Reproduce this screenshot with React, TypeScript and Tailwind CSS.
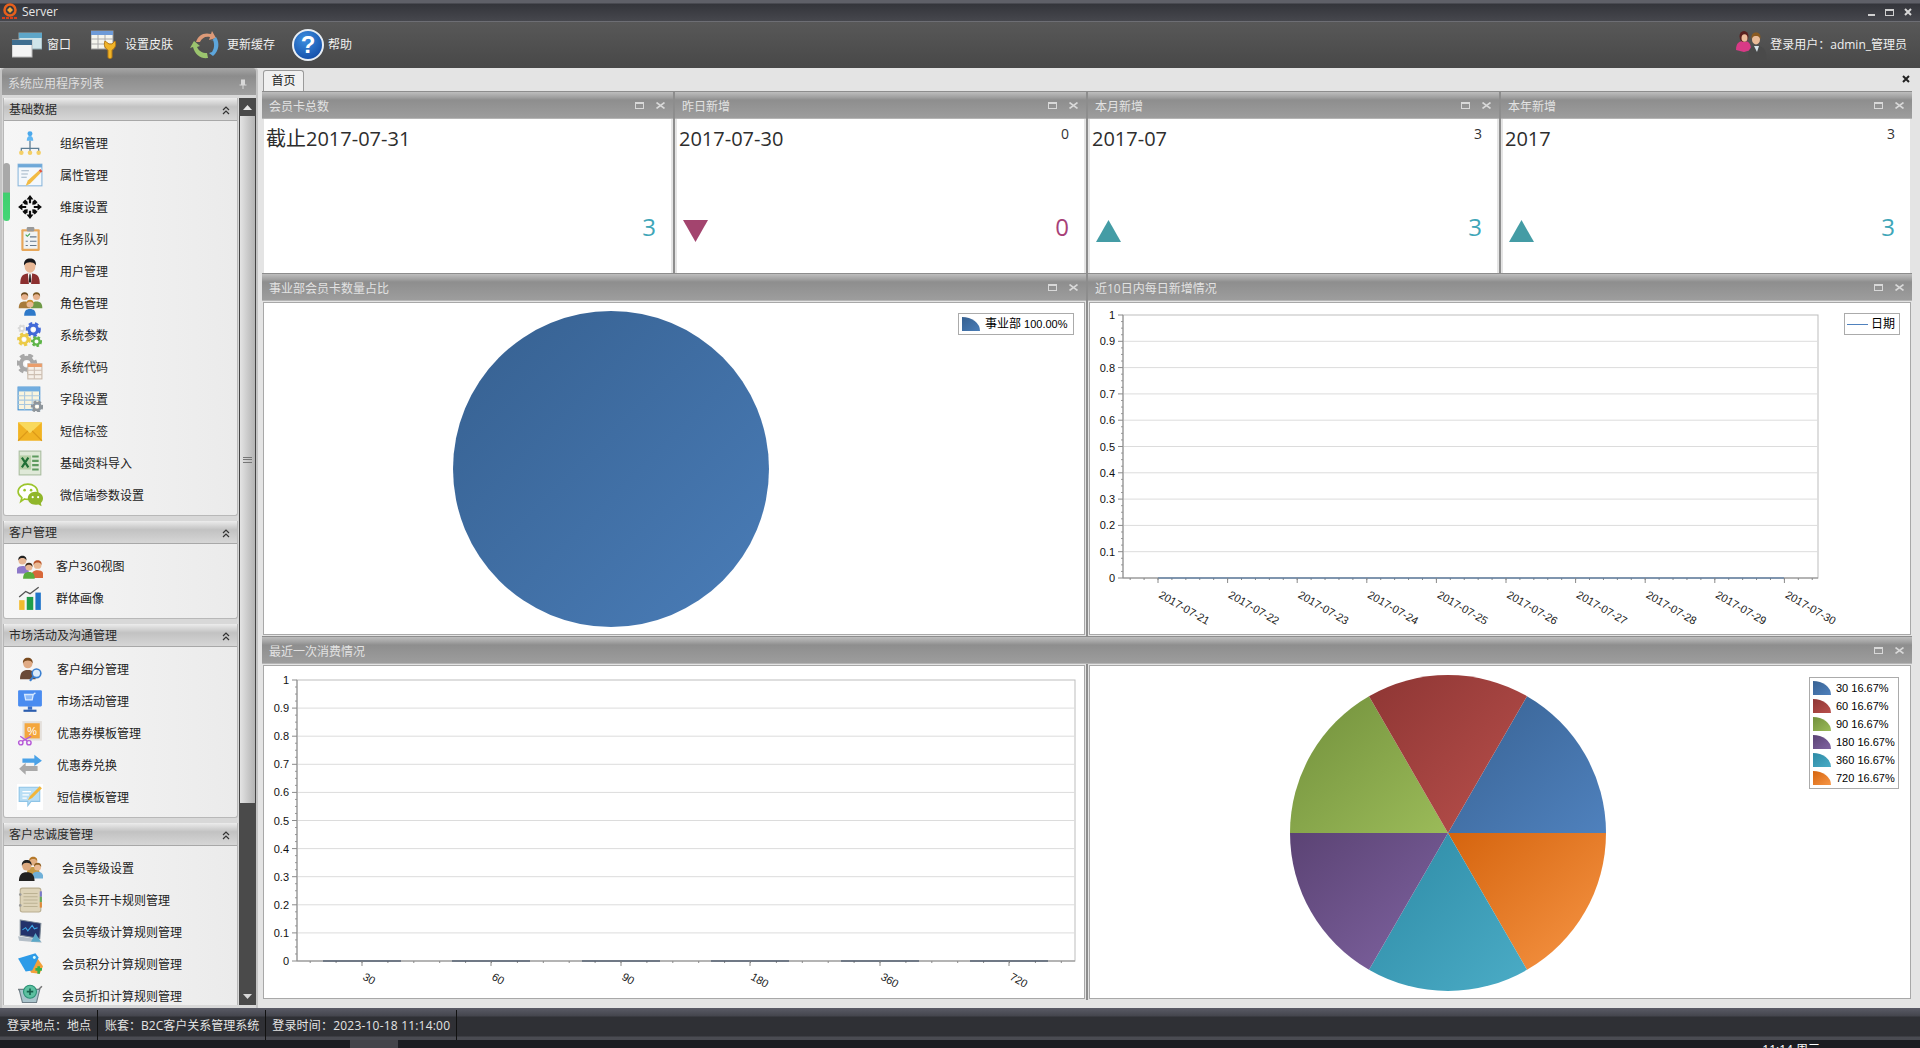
const cjk = "font-['Open_Sans','Noto_Sans_CJK_SC',sans-serif]";

type Item = { icon: string; label: string };
type Group = { title: string; gap: string; items: Item[] };

const groups: Group[] = [
  {
    title: "基础数据",
    gap: "gap-[17px]",
    items: [
      { icon: "org", label: "组织管理" },
      { icon: "attr", label: "属性管理" },
      { icon: "dim", label: "维度设置" },
      { icon: "task", label: "任务队列" },
      { icon: "user", label: "用户管理" },
      { icon: "role", label: "角色管理" },
      { icon: "param", label: "系统参数" },
      { icon: "code", label: "系统代码" },
      { icon: "field", label: "字段设置" },
      { icon: "mail", label: "短信标签" },
      { icon: "excel", label: "基础资料导入" },
      { icon: "wechat", label: "微信端参数设置" },
    ],
  },
  {
    title: "客户管理",
    gap: "gap-[13px]",
    items: [
      { icon: "c360", label: "客户360视图" },
      { icon: "bars", label: "群体画像" },
    ],
  },
  {
    title: "市场活动及沟通管理",
    gap: "gap-[14px]",
    items: [
      { icon: "segment", label: "客户细分管理" },
      { icon: "market", label: "市场活动管理" },
      { icon: "coupon", label: "优惠券模板管理" },
      { icon: "swap", label: "优惠券兑换" },
      { icon: "note", label: "短信模板管理" },
    ],
  },
  {
    title: "客户忠诚度管理",
    gap: "gap-[19px]",
    items: [
      { icon: "level", label: "会员等级设置" },
      { icon: "book", label: "会员卡开卡规则管理" },
      { icon: "laptop", label: "会员等级计算规则管理" },
      { icon: "tag", label: "会员积分计算规则管理" },
      { icon: "cart", label: "会员折扣计算规则管理" },
    ],
  },
];

const Gear = ({ x, y, r, c }: { x: number; y: number; r: number; c: string }) => (
  <g>
    <circle cx={x} cy={y} r={r} fill="none" stroke={c} strokeWidth={r * 0.55} strokeDasharray={`${r * 0.55} ${r * 0.42}`} />
    <circle cx={x} cy={y} r={r * 0.72} fill="none" stroke={c} strokeWidth={r * 0.5} />
    <circle cx={x} cy={y} r={r * 0.3} fill="#fff" />
  </g>
);

const Person = ({ x, y, s, skin, hair, body }: { x: number; y: number; s: number; skin: string; hair: string; body: string }) => (
  <g transform={`translate(${x} ${y}) scale(${s})`}>
    <path d="M-6 12c0-5 2-7 6-7s6 2 6 7z" fill={body} />
    <circle cx="0" cy="0" r="3.6" fill={skin} />
    <path d="M-3.7 0c-.4-3 1.4-4.4 3.7-4.4S4.100-3 3.700 0C3 -1.800 1.500-2.300 0-2.300S-3-1.800-3.700 0z" fill={hair} />
  </g>
);

const NavIcon = ({ name }: { name: string }) => {
  const shapes: Record<string, React.ReactNode> = {
    org: (
      <>
        <circle cx="12" cy="3.500" r="2.300" fill="#4aa8ec" />
        <path d="M9 10c0-3 1-4.500 3-4.500S15 7 15 10z" fill="#5fb6f2" />
        <path d="M12 10v7M4 20v-3h16v3M12 17v3" stroke="#5d7d94" strokeWidth="1.200" fill="none" />
        <circle cx="4" cy="21" r="2.100" fill="#f4cf66" />
        <circle cx="12" cy="21" r="2.100" fill="#f4cf66" />
        <circle cx="20" cy="21" r="2.100" fill="#f4cf66" />
      </>
    ),
    attr: (
      <>
        <rect x="1" y="2" width="22" height="20" fill="#f4f8fc" stroke="#8cb8dc" />
        <rect x="1" y="2" width="22" height="3" fill="#6ea8d8" />
        <path d="M4 8h7M4 11h6M4 14h5" stroke="#9fb4c6" />
        <path d="M8 22l2-5L20 8l2 2-10 10z" fill="#f2bb45" />
        <path d="M20 8l1.500-1.500 2 2L22 10z" fill="#e4583f" />
      </>
    ),
    dim: (
      <>
        {[0, 90, 180, 270].map((a) => (
          <g key={a} transform={`rotate(${a} 12 12)`}>
            <path d="M12 1l3.200 4h-2.200v3.500h-2V5H8.800z" fill="#0c0c0c" />
          </g>
        ))}
        {[45, 135, 225, 315].map((a) => (
          <g key={a} transform={`rotate(${a} 12 12)`}>
            <path d="M10.200 4h3.600v3l-1.800 2-1.800-2z" fill="#0c0c0c" />
          </g>
        ))}
      </>
    ),
    task: (
      <>
        <rect x="4" y="3" width="17" height="20" rx="1" fill="#e7a75a" />
        <rect x="6" y="5" width="13" height="16" fill="#f0f3f4" />
        <rect x="9" y="1" width="7" height="4" rx="1" fill="#9a9a9a" />
        <path d="M8 8l1.500 1.500L12 7" stroke="#3fa34d" fill="none" />
        <path d="M12 10h6M12 14h6M12 18h6M8 14h2M8 18h2" stroke="#66788a" />
      </>
    ),
    user: (
      <>
        <path d="M3 24c0-7 2-10 9-10s9 3 9 10z" fill="#8c2f2f" />
        <path d="M10 14h4l-1 10h-2z" fill="#fff" />
        <path d="M11.400 15h1.200l.4 7-1 1-1-1z" fill="#222" />
        <ellipse cx="12" cy="7.500" rx="5" ry="6" fill="#e8b795" />
        <path d="M6.500 7C6 2 9 .5 12 .5S18 2 17.500 7C16 4.500 14 4 12 4S8 4.500 6.500 7z" fill="#16161a" />
      </>
    ),
    role: (
      <>
        <Person x={7} y={6} s={0.9} skin="#e6b18b" hair="#6b4a1e" body="#a77a3a" />
        <Person x={18} y={6} s={0.9} skin="#e6b18b" hair="#7a5620" body="#6f9a48" />
        <Person x={12} y={13} s={0.9} skin="#eab993" hair="#c78b2e" body="#2e79c9" />
      </>
    ),
    param: (
      <>
        <Gear x={15} y={7} r={5.500} c="#4269d8" />
        <Gear x={6.500} y={16} r={5} c="#eccb48" />
        <Gear x={18} y={18} r={4} c="#5eb548" />
        <Gear x={4.500} y={6} r={3} c="#d8d8d8" />
      </>
    ),
    code: (
      <>
        <Gear x={9} y={9} r={7.500} c="#a8a8a8" />
        <rect x="10" y="9" width="13" height="14" fill="#f5efe8" stroke="#c9b9aa" />
        <rect x="10" y="9" width="13" height="3" fill="#ea9d6b" />
        <path d="M10 15h13M10 19h13M16 12v11" stroke="#cdbfb2" />
      </>
    ),
    field: (
      <>
        <rect x="1" y="1" width="20" height="21" fill="#f9f4de" stroke="#3f8ed2" />
        <rect x="1" y="1" width="20" height="4" fill="#71ade0" />
        <path d="M1 9h20M1 13h20M1 17h20M7 5v17M14 5v17" stroke="#a9c8df" />
        <Gear x={18.500} y={19} r={4.500} c="#8f969c" />
      </>
    ),
    mail: (
      <>
        <rect x="1" y="4" width="22" height="17" fill="#f1b323" />
        <path d="M1 4l11 10L23 4" fill="#f9d95c" />
        <path d="M1 21l9-9M23 21l-9-9" stroke="#dd9a18" />
      </>
    ),
    excel: (
      <>
        <rect x="2" y="1" width="20" height="22" fill="#dfe9d8" stroke="#a9bda0" />
        <path d="M14 6h6M14 10h6M14 14h6M14 18h6" stroke="#5d9a5e" strokeWidth="2" />
        <rect x="2" y="5" width="11" height="13" fill="#b6d0a6" />
        <path d="M4.500 7l6 9M10.500 7l-6 9" stroke="#1f6f35" strokeWidth="2" />
      </>
    ),
    wechat: (
      <>
        <path d="M10 2c5 0 9 3 9 7s-4 7-9 7c-1 0-2 0-3-.4L3.500 18l1-3.500C2.500 13 1 11 1 9c0-4 4-7 9-7z" fill="#fff" stroke="#9cc52c" strokeWidth="1.500" />
        <circle cx="7" cy="7.500" r="1.200" fill="#9cc52c" />
        <circle cx="13" cy="7.500" r="1.200" fill="#9cc52c" />
        <path d="M17 9c4 0 7 2.800 7 6 0 1.800-.8 3.200-2 4.400l.7 3-3-1.700c-.9.300-1.800.3-2.700.3-4 0-7-2.700-7-6s3-6 7-6z" fill="#90b62a" />
        <circle cx="14.500" cy="14" r="1" fill="#fff" />
        <circle cx="19.500" cy="14" r="1" fill="#fff" />
      </>
    ),
    c360: (
      <>
        <Person x={5} y={7} s={1} skin="#e8b795" hair="#222" body="#8d78c9" />
        <Person x={19} y={11} s={1} skin="#eab993" hair="#b9542a" body="#d8683a" />
        <Person x={11} y={13} s={0.9} skin="#e8b795" hair="#3b2a18" body="#58ad3c" />
      </>
    ),
    bars: (
      <>
        <rect x="2" y="14" width="5" height="9" fill="#f2bb2f" />
        <rect x="9" y="11" width="6" height="12" fill="#1f9e4a" />
        <rect x="17" y="7" width="5" height="16" fill="#1f74c9" />
        <path d="M2 11l6-5 4 2 8-6" stroke="#555" strokeWidth="1.200" fill="none" />
      </>
    ),
    segment: (
      <>
        <Person x={10} y={7} s={1.200} skin="#e0ab85" hair="#7a4a1e" body="#6a4a38" />
        <circle cx="18" cy="16" r="4" fill="#dcebfa" stroke="#3a7fd0" strokeWidth="1.500" />
        <path d="M15 19l-3 4" stroke="#3a7fd0" strokeWidth="2" />
      </>
    ),
    market: (
      <>
        <rect x="1" y="2" width="22" height="15" rx="1" fill="#4a8cf0" />
        <path d="M7 6h8l-1 5H8zM15 6l2-1.500" stroke="#d6e8ff" strokeWidth="1.200" fill="#8ab8f8" />
        <rect x="10" y="17" width="4" height="3" fill="#3a70c8" />
        <rect x="6" y="20" width="12" height="2" fill="#2b5dae" />
      </>
    ),
    coupon: (
      <>
        <rect x="5" y="1" width="18" height="18" fill="#e4e0dc" />
        <rect x="7" y="3" width="14" height="14" fill="#f4a63d" />
        <text x="14" y="14" fontSize="10" textAnchor="middle" fill="#fff" fontFamily="Liberation Sans">%</text>
        <circle cx="3.500" cy="21" r="2" fill="none" stroke="#b557d8" strokeWidth="1.300" />
        <circle cx="11" cy="21" r="2" fill="none" stroke="#b557d8" strokeWidth="1.300" />
        <path d="M5 19.500L13 15M9.500 19.500L3 15" stroke="#b557d8" strokeWidth="1.200" />
      </>
    ),
    swap: (
      <>
        <path d="M5 6h11V2.500L23 8l-7 5V10H5z" fill="#4aa2e8" />
        <path d="M19 13H8V10L2 15.500 8 21v-3.500h11z" fill="#a9a9a9" />
      </>
    ),
    note: (
      <>
        <rect x="0" y="0" width="24" height="24" fill="#fff" />
        <path d="M2 3h19v13H13l-3 4v-4H2z" fill="#b8def5" stroke="#8ec4e6" />
        <path d="M5 7h8M5 10h6M5 13h4" stroke="#fff" />
        <path d="M10 15l2-4 9-9 2 2-9 9z" fill="#f2b63a" />
      </>
    ),
    level: (
      <>
        <Person x={15} y={6} s={1} skin="#e2b084" hair="#b5792a" body="#c59a47" />
        <Person x={19} y={11} s={0.9} skin="#eab993" hair="#8c5f22" body="#6fb0d8" />
        <Person x={9} y={10} s={1.200} skin="#dca97f" hair="#222" body="#222" />
      </>
    ),
    book: (
      <>
        <rect x="3" y="1" width="19" height="22" rx="2" fill="#ddd3b8" stroke="#b9ae90" />
        <path d="M6 6h13M6 9h13M6 12h13M6 15h13M6 18h13" stroke="#bcb293" />
        <rect x="21" y="4" width="2" height="5" fill="#7a7ac8" />
        <rect x="21" y="9" width="2" height="5" fill="#65a85a" />
        <rect x="21" y="14" width="2" height="5" fill="#dd8a3a" />
        <circle cx="3" cy="7" r="1.200" fill="#999" />
        <circle cx="3" cy="17" r="1.200" fill="#999" />
      </>
    ),
    laptop: (
      <>
        <path d="M3 1l19 3-1 14-18-3z" fill="#23336b" stroke="#7a8794" />
        <path d="M5 10l3-2 2 3 4-5 2 3 3-1" stroke="#3fa9e8" fill="none" />
        <path d="M1 16l20 3 2 3-21-2z" fill="#b5bfc8" />
        <path d="M17 13l5 8h-9z" fill="#5aa8c8" />
      </>
    ),
    tag: (
      <>
        <path d="M8 9l11-2 5 7-3 7-8-1z" fill="#f3a03a" />
        <path d="M1 7l16-5 3 4-6 12-6 1z" fill="#2d9be8" />
        <circle cx="16" cy="6" r="1.300" fill="#dff" />
        <path d="M17 17h6M20 14v7" stroke="#34b04a" strokeWidth="2.400" />
      </>
    ),
    cart: (
      <>
        <path d="M1 6h19l3-3" stroke="#777" strokeWidth="1.500" fill="none" />
        <path d="M2 6l3 12h13l3-12z" fill="#a9c4cc" stroke="#6f7f88" />
        <path d="M5 21h13" stroke="#777" strokeWidth="1.500" />
        <circle cx="6" cy="22.500" r="1.500" fill="#555" />
        <circle cx="17" cy="22.500" r="1.500" fill="#555" />
        <circle cx="12" cy="8" r="6" fill="#5cc0a0" stroke="#2a8f74" />
        <path d="M9 8h6M12 5v6" stroke="#16604c" strokeWidth="1.500" />
      </>
    ),
  };
  return (
    <svg viewBox="0 0 24 24" className="w-[26px] h-[26px] shrink-0">
      {shapes[name]}
    </svg>
  );
};

const WindowsIcon = () => (
  <svg viewBox="0 0 30 26" className="w-[30px] h-[26px]">
    <rect x="7" y="1" width="23" height="16" fill="#cfe5ea" stroke="#8fa8b0" />
    <rect x="7" y="1" width="23" height="5" fill="#5ea6c8" />
    <rect x="0" y="8" width="20" height="17" fill="#f4f4f4" stroke="#bbb" />
    <rect x="0" y="8" width="20" height="5" fill="#3f6e90" />
  </svg>
);

const SkinIcon = () => (
  <svg viewBox="0 0 28 30" className="w-[28px] h-[30px]">
    <rect x="0" y="1" width="22" height="18" fill="#f5f5ee" stroke="#999" />
    <rect x="0" y="1" width="22" height="4" fill="#6e9bd8" />
    <path d="M0 9h22M0 14h22M7 5v14M14 5v14" stroke="#aaa" />
    <path d="M14 11c-2 5 1 8 3 9v7c0 2 4 2 4 0v-7c2-1 5-4 3-9l-3 3h-3z" fill="#f0b428" stroke="#b87a12" />
  </svg>
);

const RefreshIcon = () => (
  <svg viewBox="0 0 32 32" className="w-[32px] h-[32px]">
    <path d="M6 13C8 6 14 3 21 5l1-3 4 7-7 2 1-3c-5-1-8 1-10 5z" fill="#dd9a78" />
    <path d="M26 8c4 6 3 14-3 19l-4-3 3-1c2-3 3-7 1-12l-2 1z" fill="#5da6dc" />
    <path d="M18 29c-7 1-13-3-15-11l-3 1 4-7 6 5-3 1c2 4 5 6 10 6z" fill="#9bc46e" />
  </svg>
);

const HelpIcon = () => (
  <div className="w-[32px] h-[32px] rounded-full border-[2px] border-[#e8eef4] bg-[radial-gradient(circle_at_40%_30%,#3d8fe0,#0a3f9c)] flex items-center justify-center font-['Liberation_Sans',sans-serif] font-bold text-[24px] text-white leading-none">
    ?
  </div>
);

const PairIcon = () => (
  <svg viewBox="0 0 32 30" className="w-[32px] h-[30px]">
    <path d="M1 20c0-7 3-9 8-9s7 3 7 9l-7 2z" fill="#d83a86" />
    <ellipse cx="9" cy="6.500" rx="4.500" ry="5.500" fill="#5a1f1f" />
    <ellipse cx="9.500" cy="8" rx="3" ry="3.800" fill="#eebc9c" />
    <path d="M14 30c-2-10 1-14 8-14s10 5 9 14z" fill="#4a4a4a" />
    <path d="M19 16h5l-2 6z" fill="#d8e4ea" />
    <ellipse cx="21" cy="9.500" rx="4" ry="5" fill="#eabb98" />
    <path d="M16.500 9c-.5-5 2-6.500 4.500-6.500s5.200 1.500 4.500 6.500c-1-2.500-3-3-4.500-3s-3.500.5-4.500 3z" fill="#8a5a22" />
  </svg>
);

const Logo = () => (
  <svg viewBox="0 0 16 18" className="w-[16px] h-[18px]">
    <circle cx="8" cy="7" r="5.500" fill="none" stroke="#e8601c" strokeWidth="2.500" />
    <path d="M5 7l3-3 3 3-3 3z" fill="#f2a53a" />
    <path d="M0 15h16" stroke="#d8401c" strokeWidth="2" strokeDasharray="3 1" />
  </svg>
);

const PanelButtons = () => (
  <div className="flex items-center gap-[12px] pr-[8px]">
    <svg viewBox="0 0 9 7" className="w-[9px] h-[7px]">
      <rect x="0.500" y="0.500" width="8" height="6" fill="none" stroke="#d8d8d8" />
      <rect x="0" y="0" width="9" height="2" fill="#d8d8d8" />
    </svg>
    <svg viewBox="0 0 9 7" className="w-[9px] h-[7px]">
      <path d="M.5 .5l8 6M8.500 .5l-8 6" stroke="#d8d8d8" strokeWidth="1.600" />
    </svg>
  </div>
);

const PanelHeader = ({ title }: { title: string }) => (
  <div className="h-[27px] shrink-0 flex items-center justify-between pl-[7px] bg-[linear-gradient(#bdbdbd_0,#a2a2a2_5px,#8e8e8e_8px,#9d9d9d_100%)] border-b border-[#b5b5b5]">
    <span className="pt-[3px] text-[12px] text-[#e2e2e2]">{title}</span>
    <PanelButtons />
  </div>
);

const cards = [
  { title: "会员卡总数", date: "截止2017-07-31", small: "", big: "3", dir: "none" },
  { title: "昨日新增", date: "2017-07-30", small: "0", big: "0", dir: "down" },
  { title: "本月新增", date: "2017-07", small: "3", big: "3", dir: "up" },
  { title: "本年新增", date: "2017", small: "3", big: "3", dir: "up" },
];

const Card = ({ title, date, small, big, dir }: (typeof cards)[number]) => (
  <div className="flex flex-col min-h-0">
    <PanelHeader title={title} />
    <div className="flex-1 bg-white border-x-[2px] border-[#e4e4e4] flex flex-col justify-between pl-[2px] pr-[15px] pt-[6px] pb-[31px]">
      <div className="flex justify-between">
        <span className="text-[20px] leading-[28px] text-[#2d2d2d]">{date}</span>
        <span className="text-[14px] leading-[18px] text-[#333]">{small}</span>
      </div>
      <div className="flex justify-between items-end">
        <div className="w-[25px] h-[22px] ml-[4px]">
          {dir === "up" && (
            <svg viewBox="0 0 25 22" className="w-[25px] h-[22px]">
              <path d="M12.500 0L25 22H0z" fill="#449ca5" />
            </svg>
          )}
          {dir === "down" && (
            <svg viewBox="0 0 25 22" className="w-[25px] h-[22px]">
              <path d="M0 0h25L12.500 22z" fill="#a3446e" />
            </svg>
          )}
        </div>
        <span className={`text-[24px] leading-[30px] ${dir === "down" ? "text-[#a83f78]" : "text-[#3fa6b8]"}`}>{big}</span>
      </div>
    </div>
  </div>
);

const LineChart = ({
  ox,
  oy,
  x0,
  x1,
  y0,
  y1,
  ticks,
  labels,
  step,
  segments,
  labelY,
}: {
  ox: number;
  oy: number;
  x0: number;
  x1: number;
  y0: number;
  y1: number;
  ticks: number[];
  labels: string[];
  step: number;
  segments: [number, number, string][];
  labelY: number;
}) => {
  const ys = Array.from({ length: 11 }, (_, i) => i);
  const minor: number[] = [];
  for (let x = ticks[0] % step; x < x1; x += step) {
    if (x > x0) minor.push(x);
  }
  return (
    <svg className="w-full h-full font-['Liberation_Sans',sans-serif]">
      <g transform={`translate(${-ox} ${-oy})`}>
        <rect x={x0} y={y1} width={x1 - x0} height={y0 - y1} fill="none" stroke="#bdbdbd" />
        {ys.map((i) => {
          const y = y0 - ((y0 - y1) * i) / 10;
          return (
            <g key={i}>
              {i > 0 && i < 10 && <line x1={x0} x2={x1} y1={y} y2={y} stroke="#dcdcdc" />}
              <line x1={x0 - 5} x2={x0} y1={y} y2={y} stroke="#8a8a8a" />
              {i < 10 &&
                [1, 2, 3].map((m) => {
                  const my = y - (((y0 - y1) / 10) * m) / 4;
                  return <line key={m} x1={x0 - 2} x2={x0} y1={my} y2={my} stroke="#9a9a9a" />;
                })}
              <text x={x0 - 8} y={y + 4} fontSize="11" textAnchor="end" fill="#111">
                {i === 0 ? "0" : i === 10 ? "1" : `0.${i}`}
              </text>
            </g>
          );
        })}
        <line x1={x0} x2={x0} y1={y1} y2={y0} stroke="#8a8a8a" />
        <line x1={x0} x2={x1} y1={y0} y2={y0} stroke="#8a8a8a" />
        {minor.map((x) => (
          <line key={x} x1={x} x2={x} y1={y0} y2={y0 + 2} stroke="#8a8a8a" />
        ))}
        {segments.map(([a, b, c]) => (
          <line key={a} x1={a} x2={b} y1={y0} y2={y0} stroke={c} strokeWidth="1.200" />
        ))}
        {ticks.map((x, i) => (
          <g key={x}>
            <line x1={x} x2={x} y1={y0} y2={y0 + 5} stroke="#8a8a8a" />
            <text x={x} y={labelY} fontSize="11" fill="#222" transform={`rotate(30 ${x} ${labelY})`}>
              {labels[i]}
            </text>
          </g>
        ))}
      </g>
    </svg>
  );
};

const slices = [
  { from: 30, to: 90, a: "#386293", b: "#4f81bd" },
  { from: 90, to: 150, a: "#d5640e", b: "#f79646" },
  { from: 150, to: 210, a: "#2d8aa5", b: "#4bacc6" },
  { from: 210, to: 270, a: "#5b4374", b: "#8064a2" },
  { from: 270, to: 330, a: "#72903c", b: "#9bbb59" },
  { from: 330, to: 390, a: "#8e3634", b: "#b9504c" },
];

const point = (cx: number, cy: number, r: number, deg: number) => {
  const a = (deg * Math.PI) / 180;
  return `${cx + r * Math.sin(a)} ${cy - r * Math.cos(a)}`;
};

const Swatch = ({ id, a, b }: { id: string; a: string; b: string }) => (
  <svg viewBox="0 0 18 14" className="w-[18px] h-[14px] shrink-0">
    <defs>
      <linearGradient id={id} x1="0" y1="0" x2="1" y2="1">
        <stop offset="0" stopColor={a} />
        <stop offset="1" stopColor={b} />
      </linearGradient>
    </defs>
    <path d="M0 0a18 14 0 0 1 18 14H0z" fill={`url(#${id})`} />
  </svg>
);

const legend = [
  { label: "30 16.67%", a: "#386293", b: "#4f81bd" },
  { label: "60 16.67%", a: "#8e3634", b: "#b9504c" },
  { label: "90 16.67%", a: "#72903c", b: "#9bbb59" },
  { label: "180 16.67%", a: "#5b4374", b: "#8064a2" },
  { label: "360 16.67%", a: "#2d8aa5", b: "#4bacc6" },
  { label: "720 16.67%", a: "#d5640e", b: "#f79646" },
];

const ticks1 = Array.from({ length: 10 }, (_, i) => 1158 + i * 69.6);
const dates = Array.from({ length: 10 }, (_, i) => `2017-07-${21 + i}`);
const ticks2 = [362, 491, 621, 750, 880, 1009];
const segs2: [number, number, string][] = ticks2.map((x) => [x - 39, x + 39, "#2c3e58"]);

export default function App() {
  return (
    <div className={`w-[1920px] h-[1048px] overflow-hidden flex flex-col relative ${cjk} bg-[#e4e4e4]`}>
      <div className="h-[22px] shrink-0 flex items-center justify-between bg-[linear-gradient(#5f6068_0,#5f6068_3px,#34353b_4px,#46474d_100%)] border-b border-[#6d6e74] pl-[2px] pr-[8px] pt-[3px]">
        <div className="flex items-center gap-[4px]">
          <Logo />
          <span className="text-[12px] text-[#e6e6e6]">Server</span>
        </div>
        <div className="flex items-center gap-[10px] text-[#d8d8d8]">
          <div className="w-[7px] h-[2px] mt-[6px] bg-[#d0d0d0]" />
          <div className="w-[9px] h-[7px] border border-[#d0d0d0] border-t-2" />
          <svg viewBox="0 0 8 8" className="w-[8px] h-[8px]">
            <path d="M1 1l6 6M7 1L1 7" stroke="#d8d8d8" strokeWidth="2" />
          </svg>
        </div>
      </div>

      <div className="h-[46px] shrink-0 flex items-center justify-between bg-[linear-gradient(#585858,#484848)] pl-[12px] pr-[13px] text-[12px] text-[#f0f0f0]">
        <div className="flex items-center">
          <div className="flex items-center gap-[5px]">
            <WindowsIcon />
            <span>窗口</span>
          </div>
          <div className="flex items-center gap-[6px] ml-[20px]">
            <SkinIcon />
            <span>设置皮肤</span>
          </div>
          <div className="flex items-center gap-[5px] ml-[17px]">
            <RefreshIcon />
            <span>更新缓存</span>
          </div>
          <div className="flex items-center gap-[4px] ml-[17px]">
            <HelpIcon />
            <span>帮助</span>
          </div>
        </div>
        <div className="flex items-center gap-[3px]">
          <PairIcon />
          <span>登录用户：admin_管理员</span>
        </div>
      </div>

      <div className="flex-1 min-h-0 flex">
        <div className="w-[258px] shrink-0 flex flex-col bg-[#d8d8d8] rounded-t-[3px] border-x-[2px] border-[#c4c4c4] pb-[3px]">
          <div className="h-[27px] shrink-0 flex items-center justify-between pl-[6px] pr-[9px] pt-[4px] rounded-t-[3px] bg-[linear-gradient(#a6a6a6_0,#8c8c8c_8px,#a0a0a0_100%)]">
            <span className="text-[12px] text-[#dedede]">系统应用程序列表</span>
            <svg viewBox="0 0 8 10" className="w-[8px] h-[10px]">
              <path d="M2 0.500h4v5h1.500v1h-7v-1H2zM3.500 6.500h1V10h-1z" fill="#d8d8d8" />
            </svg>
          </div>
          <div className="flex-1 min-h-0 flex gap-px pl-px pt-[3px]">
            <div className="flex-1 min-w-0 overflow-hidden flex flex-col gap-[5px]">
              {groups.map((g) => (
                <div key={g.title} className="shrink-0 border-x border-b border-[#b8b8b8] rounded-b-[3px] bg-[linear-gradient(90deg,#f6f6f6,#ebebeb)]">
                  <div className="h-[23px] flex items-center justify-between pl-[5px] pr-[7px] pt-[2px] border-b border-[#a8a8a8] rounded-t-[3px] bg-[linear-gradient(#ececec_0,#c2c2c2_40%,#d6d6d6_100%)]">
                    <span className="text-[12px] text-[#2a2a2a]">{g.title}</span>
                    <svg viewBox="0 0 8 9" className="w-[8px] h-[9px]">
                      <path d="M1 4l3-3 3 3M1 8l3-3 3 3" stroke="#333" strokeWidth="1.200" fill="none" />
                    </svg>
                  </div>
                  <div className="pt-[6px] pb-[4px]">
                    {g.items.map((it) => (
                      <div key={it.label} className={`h-[32px] flex items-center pl-[13px] ${g.gap}`}>
                        <NavIcon name={it.icon} />
                        <span className="pt-px text-[12px] text-[#222]">{it.label}</span>
                      </div>
                    ))}
                  </div>
                </div>
              ))}
            </div>
            <div className="w-[17px] shrink-0 flex flex-col bg-[#4a4a4a]">
              <div className="h-[18px] flex items-center justify-center">
                <svg viewBox="0 0 9 5" className="w-[9px] h-[5px]">
                  <path d="M0 5l4.500-5L9 5z" fill="#e8e8e8" />
                </svg>
              </div>
              <div className="h-[687px] flex items-center justify-center bg-[linear-gradient(90deg,#e4e4e4,#c6c6c6_60%,#b4b4b4)] border-x border-[#444]">
                <div className="w-[9px] h-[6px] border-y-[1px] border-[#777] flex items-center">
                  <div className="w-full h-px bg-[#777]" />
                </div>
              </div>
              <div className="flex-1" />
              <div className="h-[18px] flex items-center justify-center">
                <svg viewBox="0 0 9 5" className="w-[9px] h-[5px]">
                  <path d="M0 0l4.500 5L9 0z" fill="#d8d8d8" />
                </svg>
              </div>
            </div>
          </div>
        </div>

        <div className="flex-1 min-w-0 flex flex-col pl-[4px] pr-[8px] pb-[8px] bg-[#e4e4e4]">
          <div className="h-[23px] shrink-0 flex items-end justify-between">
            <div className="w-[41px] h-[21px] ml-px flex items-center justify-center rounded-t-[3px] border border-b-0 border-[#9a9a9a] bg-[#f0f0f0] text-[12px] text-[#222]">
              首页
            </div>
            <svg viewBox="0 0 8 8" className="w-[8px] h-[8px] mb-[8px] mr-[2px]">
              <path d="M1 1l6 6M7 1L1 7" stroke="#222" strokeWidth="2" />
            </svg>
          </div>
          <div className="flex-1 min-h-0 grid grid-rows-[181px_362px_1fr] gap-y-px pt-px bg-[#8d8d8d]">
            <div className="grid grid-cols-4 gap-x-[2px]">
              {cards.map((c) => (
                <Card key={c.title} {...c} />
              ))}
            </div>

            <div className="grid grid-cols-2 gap-x-[2px]">
              <div className="flex flex-col min-h-0">
                <PanelHeader title="事业部会员卡数量占比" />
                <div className="flex-1 relative bg-white border-[2px] border-[#e4e4e4] outline outline-1 -outline-offset-2 outline-[#a8a8a8]">
                  <svg className="w-full h-full">
                    <defs>
                      <linearGradient id="pieOne" x1="0" y1="0" x2="1" y2="1">
                        <stop offset="0" stopColor="#366090" />
                        <stop offset="1" stopColor="#4a7db8" />
                      </linearGradient>
                    </defs>
                    <circle cx="347" cy="166" r="158" fill="url(#pieOne)" />
                  </svg>
                  <div className="absolute left-[694px] top-[10px] w-[116px] h-[22px] flex items-center gap-[5px] pl-[3px] bg-white border border-[#ababab] font-['Liberation_Sans','Noto_Sans_CJK_SC',sans-serif] text-[11px] text-black whitespace-nowrap">
                    <Swatch id="legendOne" a="#366090" b="#4a7db8" />
                    <span>
                      <span className="text-[12px]">事业部</span> 100.00%
                    </span>
                  </div>
                </div>
              </div>
              <div className="flex flex-col min-h-0">
                <PanelHeader title="近10日内每日新增情况" />
                <div className="flex-1 relative bg-white border-[2px] border-[#e4e4e4] outline outline-1 -outline-offset-2 outline-[#a8a8a8]">
                  <LineChart
                    ox={1090}
                    oy={303}
                    x0={1123}
                    x1={1818}
                    y0={578}
                    y1={315}
                    ticks={ticks1}
                    labels={dates}
                    step={13.92}
                    segments={[[1158, 1784, "#4a76a8"]]}
                    labelY={597}
                  />
                  <div className="absolute left-[754px] top-[10px] w-[56px] h-[22px] flex items-center gap-[3px] pl-[2px] bg-white border border-[#ababab] text-[12px] text-black">
                    <div className="w-[21px] h-px bg-[#4f81bd]" />
                    <span>日期</span>
                  </div>
                </div>
              </div>
            </div>

            <div className="flex flex-col min-h-0">
              <PanelHeader title="最近一次消费情况" />
              <div className="flex-1 min-h-0 grid grid-cols-2 gap-x-[2px]">
                <div className="bg-white border-[2px] border-[#e4e4e4] outline outline-1 -outline-offset-2 outline-[#a8a8a8]">
                  <LineChart
                    ox={264}
                    oy={666}
                    x0={297}
                    x1={1075}
                    y0={961}
                    y1={680}
                    ticks={ticks2}
                    labels={["30", "60", "90", "180", "360", "720"]}
                    step={25.9}
                    segments={segs2}
                    labelY={979}
                  />
                </div>
                <div className="relative bg-white border-[2px] border-[#e4e4e4] outline outline-1 -outline-offset-2 outline-[#a8a8a8]">
                  <svg className="w-full h-full">
                    <defs>
                      {slices.map((s) => (
                        <linearGradient key={s.from} id={`slice${s.from}`} x1="0" y1="0" x2="1" y2="1">
                          <stop offset="0" stopColor={s.a} />
                          <stop offset="1" stopColor={s.b} />
                        </linearGradient>
                      ))}
                    </defs>
                    {slices.map((s) => (
                      <path
                        key={s.from}
                        d={`M358 167L${point(358, 167, 158, s.from)}A158 158 0 0 1 ${point(358, 167, 158, s.to)}Z`}
                        fill={`url(#slice${s.from})`}
                      />
                    ))}
                  </svg>
                  <div className="absolute left-[719px] top-[11px] w-[90px] flex flex-col py-[1px] pl-[3px] bg-white border border-[#ababab] font-['Liberation_Sans',sans-serif] text-[11px] text-black">
                    {legend.map((l, i) => (
                      <div key={l.label} className="h-[18px] flex items-center gap-[5px] whitespace-nowrap">
                        <Swatch id={`legendRow${i}`} a={l.a} b={l.b} />
                        <span>{l.label}</span>
                      </div>
                    ))}
                  </div>
                </div>
              </div>
            </div>
          </div>
        </div>
      </div>

      <div className="h-[32px] shrink-0 flex items-stretch bg-[linear-gradient(#5a5b66_0,#44454d_8px,#2f3035_9px,#2f3035_28px,#4a4b52_29px,#4a4b52_100%)] pl-[7px] text-[12px] text-[#e4e4e4]">
        <div className="flex items-center pr-[6px] pt-px mt-[2px] border-r border-[#111]">登录地点：地点</div>
        <div className="flex items-center pl-[7px] pr-[6px] pt-px mt-[2px] border-r border-[#111]">账套：B2C客户关系管理系统</div>
        <div className="flex items-center pl-[6px] pr-[6px] pt-px mt-[2px] border-r border-[#111] tracking-[0.2px]">登录时间：2023-10-18 11:14:00</div>
      </div>

      <div className="h-[8px] shrink-0 flex justify-between overflow-hidden bg-[#1c1d22]">
        <div className="w-[48px] ml-[350px] bg-[#44444a]" />
        <span className="mt-[3px] mr-[100px] text-[12px] leading-[14px] text-white">11:14 周三</span>
      </div>

      <div className="absolute left-[3px] top-[163px] w-[7px] h-[58px] rounded-full bg-[linear-gradient(#a8a8a8_0,#a8a8a8_50%,#3fcf6f_52%,#45d676_100%)]" />
    </div>
  );
}
